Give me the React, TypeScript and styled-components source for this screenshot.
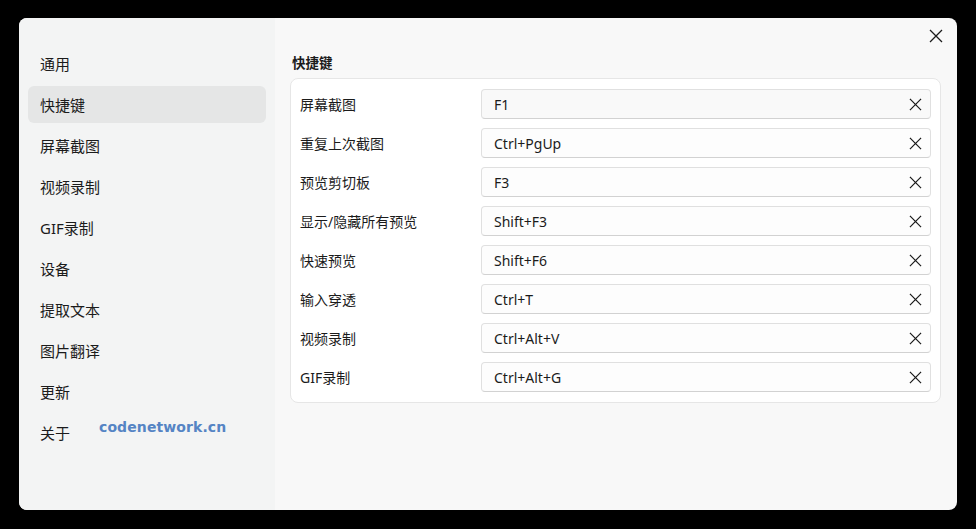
import React from 'react';
import styled, { createGlobalStyle } from 'styled-components';

const GlobalStyle = createGlobalStyle`
  html, body {
    margin: 0;
    padding: 0;
    background: #000;
  }
  body {
    font-family: "Noto Sans", "Noto Sans CJK SC", sans-serif;
    color: #1f1f1f;
  }
`;

const Screen = styled.div`
  width: 976px;
  height: 529px;
  box-sizing: border-box;
  padding: 18px 19px 19px 19px;
  background: #000;
`;

const Window = styled.div`
  position: relative;
  display: flex;
  width: 938px;
  height: 492px;
  border-radius: 8px;
  overflow: hidden;
  background: #f8f8f8;
`;

const Sidebar = styled.nav`
  width: 256px;
  flex: none;
  box-sizing: border-box;
  padding: 27px 9px 0 9px;
  background: #f3f4f4;
  display: flex;
  flex-direction: column;
  gap: 4px;
`;

const NavItem = styled.div<{ $active?: boolean }>`
  position: relative;
  height: 37px;
  display: flex;
  align-items: center;
  padding-left: 12px;
  border-radius: 6px;
  font-size: 15px;
  color: #1b1b1b;
  background: ${(p) => (p.$active ? '#e5e6e6' : 'transparent')};
`;

const Watermark = styled.span`
  position: absolute;
  left: 71px;
  top: 5px;
  font-family: "DejaVu Sans", sans-serif;
  font-weight: bold;
  font-size: 14px;
  color: #5584c4;
  letter-spacing: 0.1px;
`;

const Main = styled.main`
  flex: 1;
  box-sizing: border-box;
  padding: 36px 16px 0 15px;
`;

const Heading = styled.h2`
  margin: 0 0 6px 2px;
  font-size: 13.5px;
  line-height: 18px;
  font-weight: bold;
  color: #1b1b1b;
`;

const Card = styled.div`
  background: #fff;
  border: 1px solid #e6e6e6;
  border-radius: 8px;
  padding: 10px 9px 10px 9px;
  display: flex;
  flex-direction: column;
  gap: 9px;
`;

const Row = styled.div`
  display: grid;
  grid-template-columns: 181px 1fr;
  align-items: center;
`;

const Label = styled.span`
  font-size: 14px;
  color: #1b1b1b;
`;

const KeyField = styled.div<{ $focused?: boolean }>`
  height: 30px;
  box-sizing: border-box;
  border: 1px solid #e0e0e0;
  border-bottom-color: #d2d2d2;
  border-radius: 4px;
  background: ${(p) => (p.$focused ? '#f9f9f9' : '#fdfdfd')};
  display: flex;
  align-items: center;
  justify-content: space-between;
  padding: 0 8px 0 12px;
  font-size: 14px;
  color: #1b1b1b;
`;

const ClearButton = styled.button`
  border: 0;
  background: transparent;
  padding: 0;
  width: 14px;
  height: 14px;
  display: flex;
  align-items: center;
  justify-content: center;
  color: #1b1b1b;
`;

const CloseButton = styled.button`
  position: absolute;
  top: 11px;
  right: 14px;
  width: 14px;
  height: 14px;
  border: 0;
  padding: 0;
  background: transparent;
  display: flex;
  color: #1b1b1b;
`;

const Cross: React.FC<{ size: number }> = ({ size }) => (
  <svg width={size} height={size} viewBox="0 0 14 14" fill="none">
    <path d="M1 1L13 13M13 1L1 13" stroke="currentColor" strokeWidth="1.3" />
  </svg>
);

const navItems = ['通用', '快捷键', '屏幕截图', '视频录制', 'GIF录制', '设备', '提取文本', '图片翻译', '更新', '关于'];

const shortcuts = [
  ['屏幕截图', 'F1'],
  ['重复上次截图', 'Ctrl+PgUp'],
  ['预览剪切板', 'F3'],
  ['显示/隐藏所有预览', 'Shift+F3'],
  ['快速预览', 'Shift+F6'],
  ['输入穿透', 'Ctrl+T'],
  ['视频录制', 'Ctrl+Alt+V'],
  ['GIF录制', 'Ctrl+Alt+G'],
];

export default function App() {
  return (
    <Screen>
      <GlobalStyle />
      <Window>
        <Sidebar>
          {navItems.map((item) => (
            <NavItem key={item} $active={item === '快捷键'}>
              {item}
              {item === '关于' && <Watermark>codenetwork.cn</Watermark>}
            </NavItem>
          ))}
        </Sidebar>
        <Main>
          <Heading>快捷键</Heading>
          <Card>
            {shortcuts.map(([label, key], i) => (
              <Row key={label}>
                <Label>{label}</Label>
                <KeyField $focused={i === 0}>
                  {key}
                  <ClearButton>
                    <Cross size={13} />
                  </ClearButton>
                </KeyField>
              </Row>
            ))}
          </Card>
        </Main>
        <CloseButton>
          <Cross size={14} />
        </CloseButton>
      </Window>
    </Screen>
  );
}
